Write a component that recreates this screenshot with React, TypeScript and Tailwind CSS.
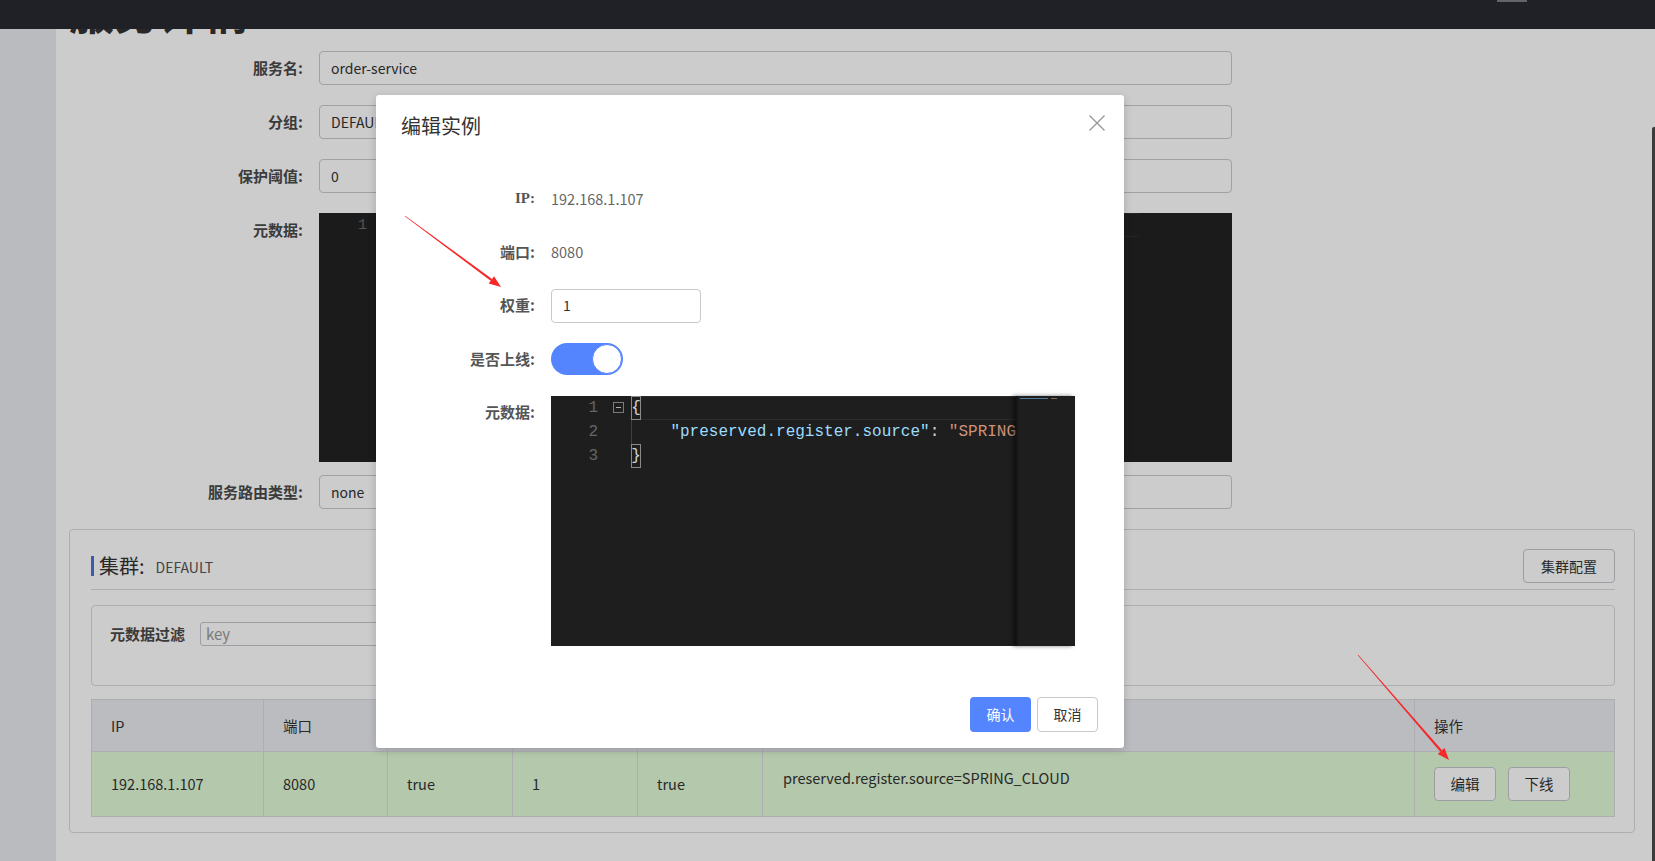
import React from "react";

const cols = [
  { title: "IP", w: "w-[172px]" },
  { title: "端口", w: "w-[124px]" },
  { title: "临时实例", w: "w-[125px]" },
  { title: "权重", w: "w-[125px]" },
  { title: "健康状态", w: "w-[125px]" },
  { title: "元数据", w: "w-[652px]" },
  { title: "操作", w: "flex-1" },
];

function arrowPoints(x1: number, y1: number, x2: number, y2: number) {
  const dx = x2 - x1;
  const dy = y2 - y1;
  const len = Math.sqrt(dx * dx + dy * dy);
  const ux = dx / len;
  const uy = dy / len;
  const px = -uy;
  const py = ux;
  const bx = x2 - ux * 12;
  const by = y2 - uy * 12;
  const shaft = [
    [x1 + px * 0.3, y1 + py * 0.3],
    [bx + px * 1.2, by + py * 1.2],
    [bx - px * 1.2, by - py * 1.2],
    [x1 - px * 0.3, y1 - py * 0.3],
  ];
  const head = [
    [x2, y2],
    [bx + px * 4.5, by + py * 4.5],
    [bx - px * 4.5, by - py * 4.5],
  ];
  const f = (p: number[][]) => p.map((q) => q.join(",")).join(" ");
  return { shaft: f(shaft), head: f(head) };
}

function Arrow({ x1, y1, x2, y2 }: { x1: number; y1: number; x2: number; y2: number }) {
  const p = arrowPoints(x1, y1, x2, y2);
  return (
    <g fill="#f5282a">
      <polygon points={p.shaft} />
      <polygon points={p.head} />
    </g>
  );
}

function FormRow({ label, children }: { label: string; children: React.ReactNode }) {
  return (
    <div className="flex items-start mb-[20px]">
      <div className="w-[234px] h-[34px] flex items-center justify-end text-[15px] font-bold text-[#4a4a4a]">
        {label}
      </div>
      <div className="ml-[16px] w-[913px]">{children}</div>
    </div>
  );
}

function TextBox({ value }: { value: string }) {
  return (
    <div className="h-[34px] border border-[#c8cad0] rounded-[4px] bg-white flex items-center px-[11px] text-[#333]">
      {value}
    </div>
  );
}

export default function App() {
  return (
    <div className="relative w-[1655px] h-[861px] overflow-hidden bg-white text-[14px] text-[#333] font-['Noto_Sans_CJK_SC',sans-serif]">
      {/* top bar */}
      <div className="h-[29px] bg-[#272a31] flex justify-end pr-[128px]">
        <div className="w-[30px] h-[2px] bg-[#7b7e84]" />
      </div>

      <div className="flex h-[832px]">
        <div className="w-[56px] bg-[#e8eaee]" />

        <main className="flex-1 overflow-hidden pl-[13px] pr-[14px]">
          <h1 className="-mt-[42px] mb-[16px] h-[48px] text-[45px] leading-[48px] font-bold text-[#333]">
            服务详情
          </h1>

          <FormRow label="服务名:">
            <TextBox value="order-service" />
          </FormRow>
          <FormRow label="分组:">
            <TextBox value="DEFAULT_GROUP" />
          </FormRow>
          <FormRow label="保护阈值:">
            <TextBox value="0" />
          </FormRow>
          <div className="flex items-start mb-[13px]">
            <div className="w-[234px] h-[34px] flex items-center justify-end text-[15px] font-bold text-[#4a4a4a]">
              元数据:
            </div>
            <div className="ml-[16px] w-[913px] h-[249px] bg-[#222] flex font-['Liberation_Mono',monospace] text-[15px]">
              <div className="w-[48px] pt-[1px] text-right text-[#6a6a6a] leading-[24px]">1</div>
              <div className="flex-1 pl-[13px]">
                <div className="h-[24px] border-y border-[#2f2f2f] mr-[93px]" />
              </div>
            </div>
          </div>
          <FormRow label="服务路由类型:">
            <TextBox value="none" />
          </FormRow>

          {/* cluster panel */}
          <section className="border border-[#d8dadf] rounded-[4px] pl-[21px] pr-[19px] pt-[19px] pb-[15px]">
            <div className="flex items-center justify-between h-[34px]">
              <div className="flex items-center">
                <div className="w-[3px] h-[20px] bg-[#4a72e0]" />
                <span className="ml-[5px] text-[20px] text-[#333]">集群:</span>
                <span className="ml-[11px] mt-[2px] text-[14px] text-[#555]">DEFAULT</span>
              </div>
              <button className="w-[92px] h-[34px] border border-[#c4c6cc] rounded-[4px] bg-white text-[14px] text-[#333]">
                集群配置
              </button>
            </div>
            <div className="mt-[6px] border-b border-[#d8dadf]" />

            <div className="mt-[15px] h-[81px] border border-[#d8dadf] rounded-[4px] pl-[18px] pt-[16px]">
              <div className="flex items-center h-[24px]">
                <span className="w-[80px] text-[15px] font-bold text-[#4a4a4a]">元数据过滤</span>
                <div className="ml-[10px] w-[260px] h-[24px] border border-[#c4c6cc] rounded-[3px] bg-white flex items-center px-[5px] text-[15px] text-[#999]">
                  key
                </div>
              </div>
            </div>

            <div className="mt-[13px] border border-[#d8dadf]">
              <div className="flex h-[52px] bg-[#eaebf0] border-b border-[#d8dadf] text-[14.5px]">
                {cols.map((c, i) => (
                  <div
                    key={c.title}
                    className={`${c.w} flex items-center pl-[19px] text-[#333] ${i < cols.length - 1 ? "border-r border-[#d8dadf]" : ""}`}
                  >
                    {c.title}
                  </div>
                ))}
              </div>
              <div className="flex h-[64px] bg-[#e2fad7] text-[14.5px]">
                <div className="w-[172px] flex items-center pl-[19px] border-r border-[#d8dadf]">192.168.1.107</div>
                <div className="w-[124px] flex items-center pl-[19px] border-r border-[#d8dadf]">8080</div>
                <div className="w-[125px] flex items-center pl-[19px] border-r border-[#d8dadf]">true</div>
                <div className="w-[125px] flex items-center pl-[19px] border-r border-[#d8dadf]">1</div>
                <div className="w-[125px] flex items-center pl-[19px] border-r border-[#d8dadf]">true</div>
                <div className="w-[652px] pl-[20px] pt-[15px] leading-[22px] border-r border-[#d8dadf]">
                  preserved.register.source=SPRING_CLOUD
                </div>
                <div className="flex-1 flex items-center pl-[19px] gap-[12px]">
                  <button className="w-[62px] h-[34px] border border-[#c4c6cc] rounded-[4px] bg-white text-[#333]">编辑</button>
                  <button className="w-[62px] h-[34px] border border-[#c4c6cc] rounded-[4px] bg-white text-[#333]">下线</button>
                </div>
              </div>
            </div>
          </section>
        </main>

        <div className="w-[6px] bg-white">
          <div className="ml-[3px] mt-[98px] w-[3px] h-[740px] rounded-l-[2px] bg-[#4a4a4a]" />
        </div>
      </div>

      {/* dim overlay */}
      <div className="absolute inset-0 bg-black/20" />

      {/* modal */}
      <div className="absolute left-[376px] top-[95px] w-[748px] h-[653px] bg-white rounded-[3px] shadow-[0_2px_8px_rgba(0,0,0,0.18)] flex flex-col">
        <div className="flex justify-between pl-[25px] pr-[18px] pt-[12px]">
          <h2 className="text-[20px] leading-[28px] mt-[5px] text-[#333]">编辑实例</h2>
          <svg width="18" height="18" viewBox="0 0 18 18" className="mt-[7px]">
            <path d="M1.5 1.5 L16.5 16.5 M16.5 1.5 L1.5 16.5" stroke="#999" strokeWidth="1.4" fill="none" />
          </svg>
        </div>

        <div className="mt-[41.5px] flex flex-col gap-[19.5px]">
          <div className="flex items-center h-[34px]">
            <span className="w-[159px] text-right font-bold text-[#555] font-['Liberation_Serif','Noto_Sans_CJK_SC',serif] text-[15px]">IP:</span>
            <span className="ml-[16px] text-[#666] text-[14.5px]">192.168.1.107</span>
          </div>
          <div className="flex items-center h-[34px]">
            <span className="w-[159px] text-right text-[15px] font-bold text-[#555]">端口:</span>
            <span className="ml-[16px] text-[#666] text-[14.5px]">8080</span>
          </div>
          <div className="flex items-center h-[34px]">
            <span className="w-[159px] text-right text-[15px] font-bold text-[#555]">权重:</span>
            <div className="ml-[16px] w-[150px] h-[34px] border border-[#c8c9cc] rounded-[4px] flex items-center pl-[11px] text-[#333]">
              1
            </div>
          </div>
          <div className="flex items-center h-[34px]">
            <span className="w-[159px] text-right text-[15px] font-bold text-[#555]">是否上线:</span>
            <div className="ml-[16px] w-[72px] h-[32px] rounded-full bg-[#5584ff] flex items-center justify-end pr-[1px]">
              <div className="w-[30px] h-[30px] rounded-full bg-white border border-[#5584ff]" />
            </div>
          </div>
          <div className="flex items-start">
            <span className="w-[159px] h-[34px] flex items-center justify-end text-[15px] font-bold text-[#555]">元数据:</span>
            <div className="ml-[16px] w-[524px] h-[250px] bg-[#1e1e1e] flex font-['Liberation_Mono',monospace] text-[16px] leading-[24px]">
              <div className="w-[50px] pr-[3px] text-right text-[#656565]">
                <div className="h-[24px]">1</div>
                <div className="h-[24px]">2</div>
                <div className="h-[24px]">3</div>
              </div>
              <div className="w-[30px] pl-[12px]">
                <div className="h-[24px] flex items-center">
                  <div className="w-[11px] h-[11px] border border-[#7a7a7a] flex items-center justify-center">
                    <div className="w-[5px] h-[1px] bg-[#b0b0b0]" />
                  </div>
                </div>
              </div>
              <div className="w-[385px] overflow-hidden text-[#d4d4d4] whitespace-pre">
                <div className="h-[24px] flex">
                  <span className="w-[10px] h-[24px] border border-[#8a8a8a] flex items-center justify-center">{"{"}</span>
                  <div className="flex-1 border-y border-[#2c2c2c]" />
                </div>
                <div className="h-[24px] border-l border-[#404040]">
                  {"    "}
                  <span className="text-[#9cdcfe]">"preserved.register.source"</span>
                  <span>: </span>
                  <span className="text-[#ce9178]">"SPRING_CLOUD"</span>
                </div>
                <div className="h-[24px] flex">
                  <span className="w-[10px] h-[24px] border border-[#8a8a8a] flex items-center justify-center">{"}"}</span>
                </div>
              </div>
              <div className="flex-1 border-l-2 border-[#151515] shadow-[-3px_0_4px_rgba(0,0,0,0.5)] pl-[2px] pt-[2px]">
                <div className="flex gap-[3px]">
                  <div className="w-[28px] h-[1px] bg-[#4f7a99]" />
                  <div className="w-[6px] h-[1px] bg-[#8a6652]" />
                </div>
              </div>
            </div>
          </div>
        </div>

        <div className="mt-auto mb-[16px] mr-[26px] flex justify-end gap-[6px]">
          <button className="w-[61px] h-[35px] rounded-[4px] bg-[#5584ff] text-white">确认</button>
          <button className="w-[61px] h-[35px] rounded-[4px] border border-[#c8c9cc] bg-white text-[#333]">取消</button>
        </div>
      </div>

      {/* annotation arrows */}
      <svg className="absolute inset-0 pointer-events-none" width="1655" height="861">
        <Arrow x1={405} y1={216} x2={501} y2={287} />
        <Arrow x1={1358} y1={655} x2={1449} y2={760} />
      </svg>
    </div>
  );
}
